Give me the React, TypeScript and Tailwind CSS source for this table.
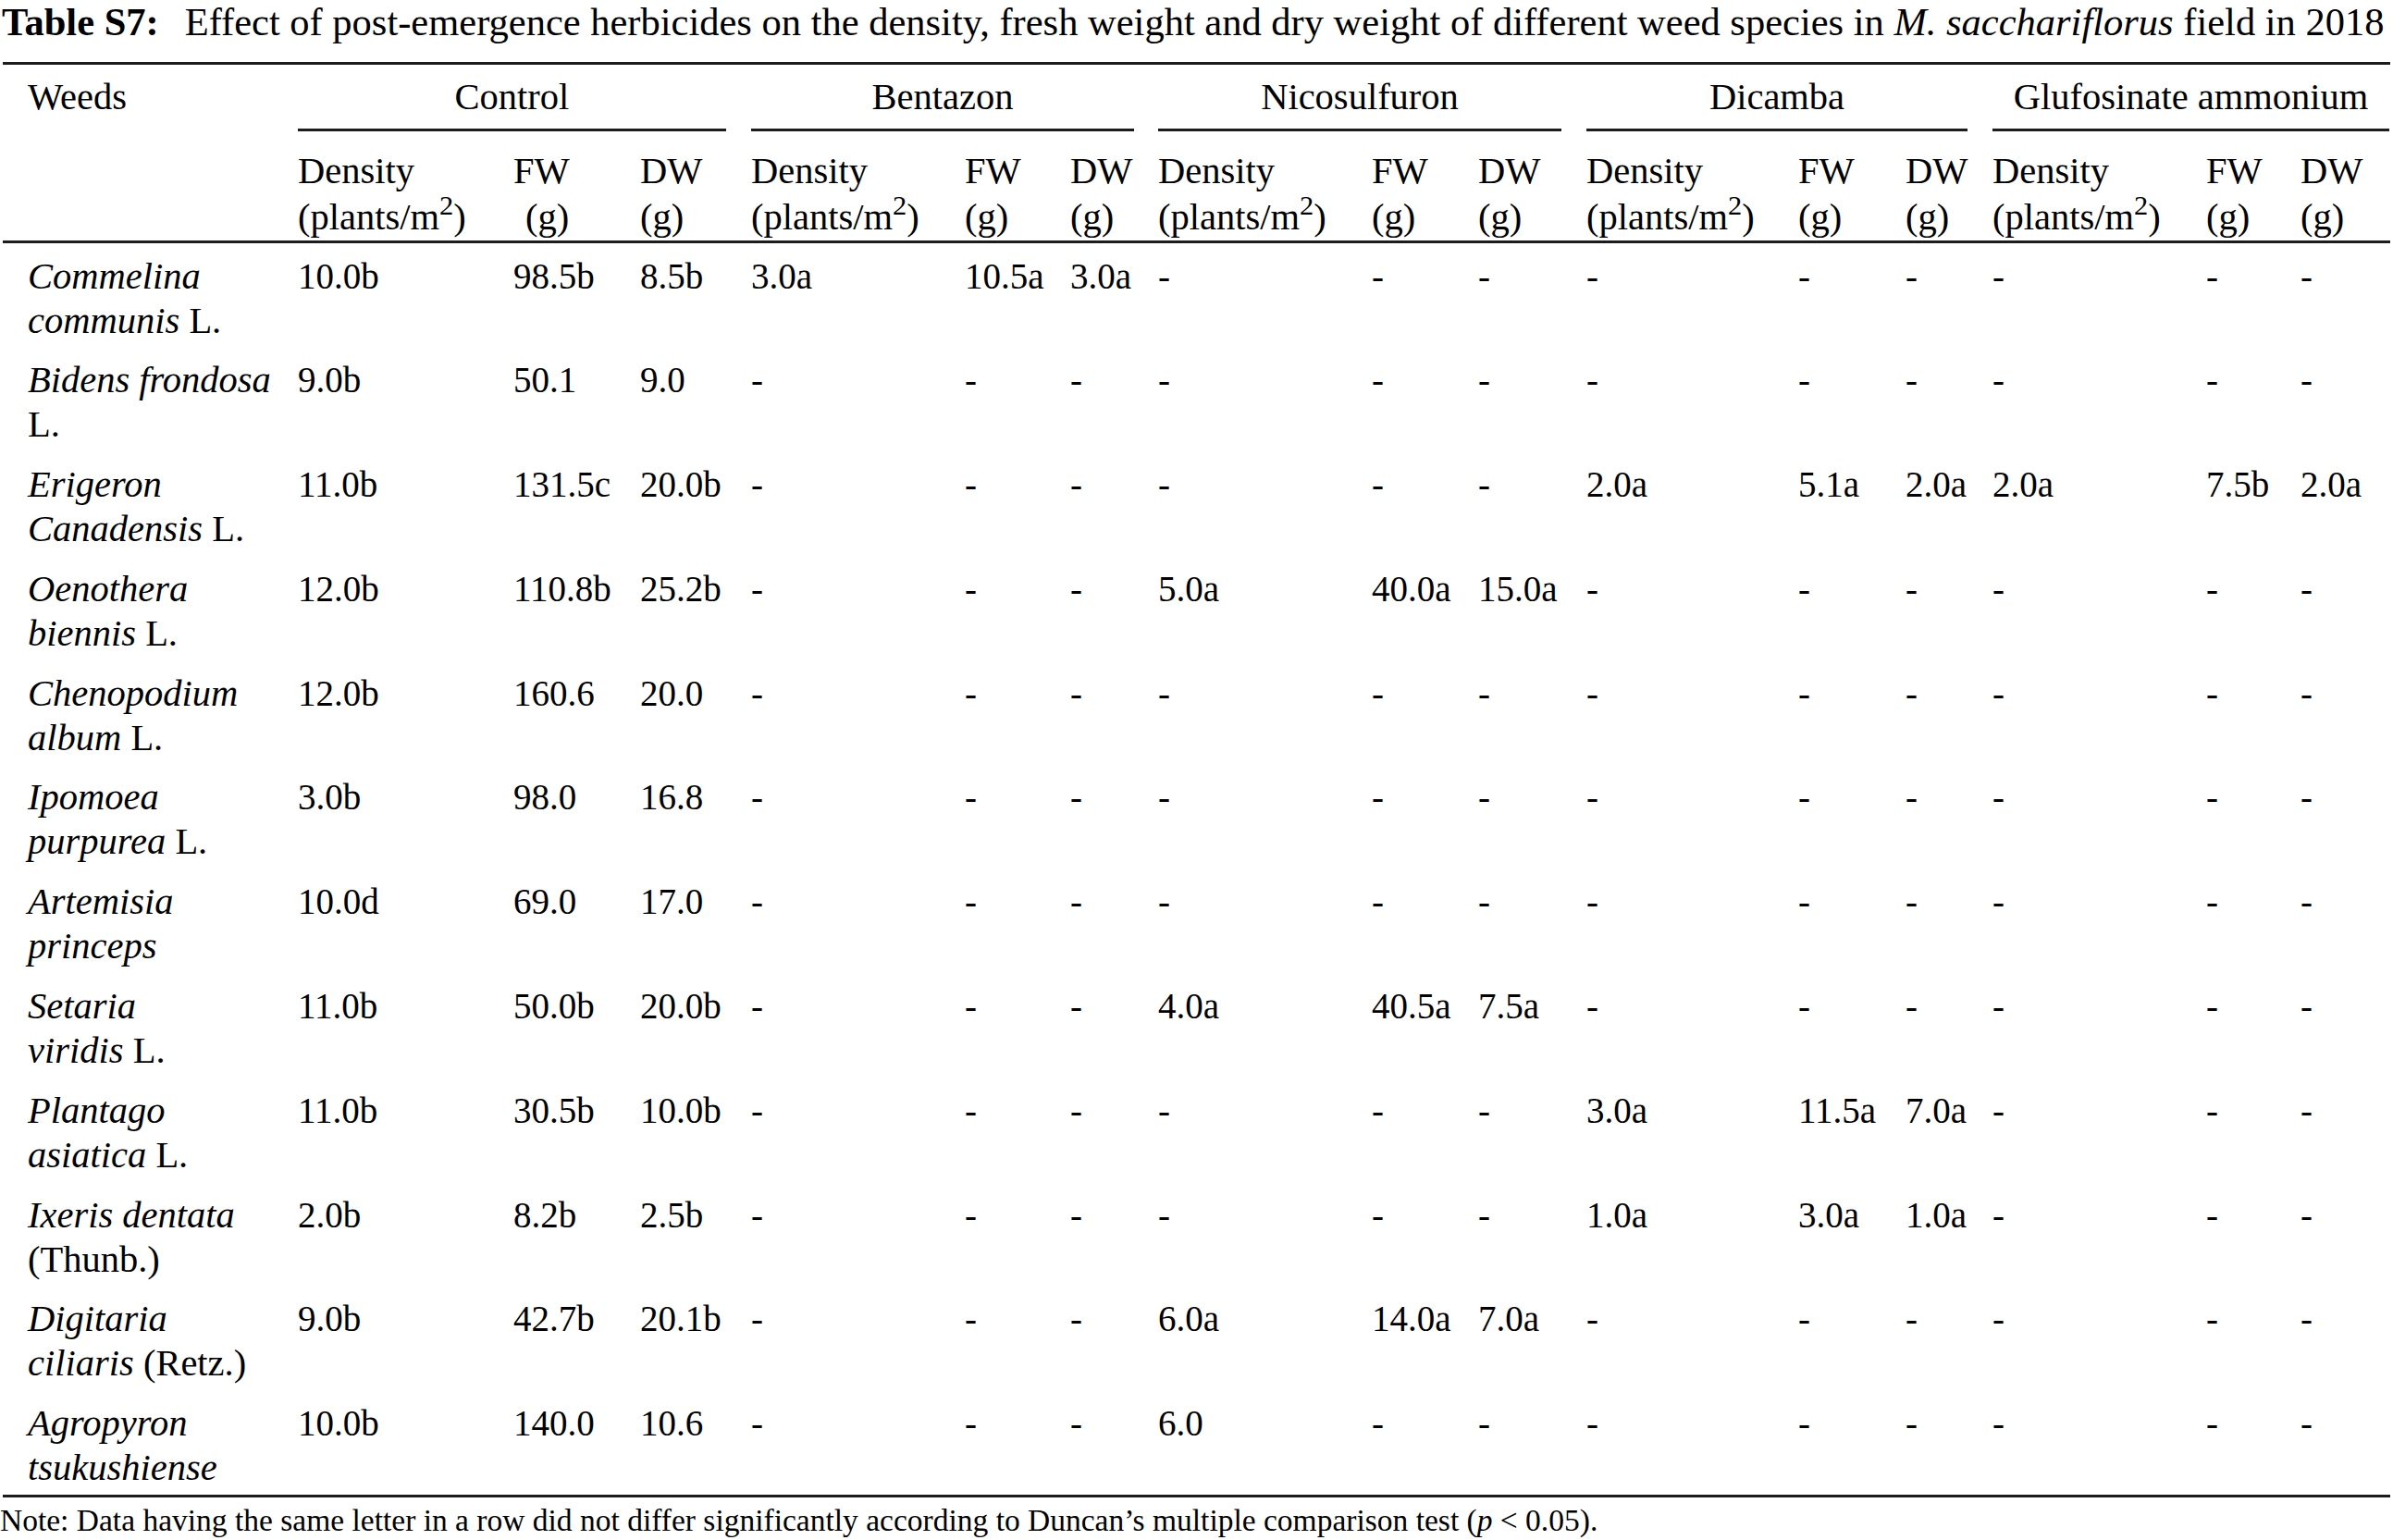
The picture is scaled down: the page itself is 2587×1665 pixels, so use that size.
import React from "react";

const COLS =
  "grid grid-cols-[322px_233px_137px_120px_231px_114px_95px_231px_115px_117px_229px_116px_94px_231px_102px_100px]";

type Row = { l1: React.ReactNode; l2: React.ReactNode; v: string[] };

const D = "-";

const rows: Row[] = [
  {
    l1: <i>Commelina</i>,
    l2: (
      <>
        <i>communis</i> L.
      </>
    ),
    v: ["10.0b", "98.5b", "8.5b", "3.0a", "10.5a", "3.0a", D, D, D, D, D, D, D, D, D],
  },
  {
    l1: <i>Bidens frondosa</i>,
    l2: <>L.</>,
    v: ["9.0b", "50.1", "9.0", D, D, D, D, D, D, D, D, D, D, D, D],
  },
  {
    l1: <i>Erigeron</i>,
    l2: (
      <>
        <i>Canadensis</i> L.
      </>
    ),
    v: ["11.0b", "131.5c", "20.0b", D, D, D, D, D, D, "2.0a", "5.1a", "2.0a", "2.0a", "7.5b", "2.0a"],
  },
  {
    l1: <i>Oenothera</i>,
    l2: (
      <>
        <i>biennis</i> L.
      </>
    ),
    v: ["12.0b", "110.8b", "25.2b", D, D, D, "5.0a", "40.0a", "15.0a", D, D, D, D, D, D],
  },
  {
    l1: <i>Chenopodium</i>,
    l2: (
      <>
        <i>album</i> L.
      </>
    ),
    v: ["12.0b", "160.6", "20.0", D, D, D, D, D, D, D, D, D, D, D, D],
  },
  {
    l1: <i>Ipomoea</i>,
    l2: (
      <>
        <i>purpurea</i> L.
      </>
    ),
    v: ["3.0b", "98.0", "16.8", D, D, D, D, D, D, D, D, D, D, D, D],
  },
  {
    l1: <i>Artemisia</i>,
    l2: <i>princeps</i>,
    v: ["10.0d", "69.0", "17.0", D, D, D, D, D, D, D, D, D, D, D, D],
  },
  {
    l1: <i>Setaria</i>,
    l2: (
      <>
        <i>viridis</i> L.
      </>
    ),
    v: ["11.0b", "50.0b", "20.0b", D, D, D, "4.0a", "40.5a", "7.5a", D, D, D, D, D, D],
  },
  {
    l1: <i>Plantago</i>,
    l2: (
      <>
        <i>asiatica</i> L.
      </>
    ),
    v: ["11.0b", "30.5b", "10.0b", D, D, D, D, D, D, "3.0a", "11.5a", "7.0a", D, D, D],
  },
  {
    l1: <i>Ixeris dentata</i>,
    l2: <>(Thunb.)</>,
    v: ["2.0b", "8.2b", "2.5b", D, D, D, D, D, D, "1.0a", "3.0a", "1.0a", D, D, D],
  },
  {
    l1: <i>Digitaria</i>,
    l2: (
      <>
        <i>ciliaris</i> (Retz.)
      </>
    ),
    v: ["9.0b", "42.7b", "20.1b", D, D, D, "6.0a", "14.0a", "7.0a", D, D, D, D, D, D],
  },
  {
    l1: <i>Agropyron</i>,
    l2: <i>tsukushiense</i>,
    v: ["10.0b", "140.0", "10.6", D, D, D, "6.0", D, D, D, D, D, D, D, D],
  },
];

const groups = [
  { name: "Control", mr: "mr-[27px]" },
  { name: "Bentazon", mr: "mr-[26px]" },
  { name: "Nicosulfuron", mr: "mr-[27px]" },
  { name: "Dicamba", mr: "mr-[27px]" },
  { name: "Glufosinate ammonium", mr: "mr-[4px]" },
];

function Rule({ className = "" }: { className?: string }) {
  return <div className={"h-[3px] bg-[#1c1c1c] mx-[3px] " + className} />;
}

function SubHead({ indentG }: { indentG?: boolean }) {
  return (
    <>
      <div>
        Density
        <br />
        (plants/m<sup>2</sup>)
      </div>
      <div>
        FW
        <br />
        <span className={indentG ? "pl-[13px]" : ""}>(g)</span>
      </div>
      <div>
        DW
        <br />
        (g)
      </div>
    </>
  );
}

export default function App() {
  return (
    <div className="w-[2587px] h-[1665px] overflow-hidden bg-white text-black font-['Liberation_Serif','Times_New_Roman',serif]">
      {/* Title */}
      <div className="text-[42.5px] leading-[47px] whitespace-nowrap pl-[2px]">
        <span className="font-bold">Table S7:</span>
        <span className="ml-[28px]">
          Effect of post-emergence herbicides on the density, fresh weight and dry weight of different weed species
          in <i>M. sacchariflorus</i> field in 2018
        </span>
      </div>

      <Rule className="mt-[20px]" />

      <div className="text-[40.5px]">
        {/* Group header row */}
        <div className={COLS + " leading-[48px]"}>
          <div className="pl-[30px] pt-[11px]">Weeds</div>
          {groups.map((g) => (
            <div key={g.name} className="col-span-3 pt-[11px]">
              <div className={g.mr}>
                <div className="text-center whitespace-nowrap">{g.name}</div>
                <div className="h-[2.5px] bg-[#1c1c1c] mt-[10px]" />
              </div>
            </div>
          ))}
        </div>

        {/* Sub header row */}
        <div className={COLS + " leading-[50px] pt-[18px] whitespace-nowrap"}>
          <div />
          <SubHead indentG />
          <SubHead />
          <SubHead />
          <SubHead />
          <SubHead />
        </div>

        <Rule />

        {/* Data rows */}
        <div className="leading-[48px]">
          {rows.map((r, i) => (
            <div key={i} className={COLS + " pt-[12px] pb-[4.8px]"}>
              <div className="pl-[30px] whitespace-nowrap">
                {r.l1}
                <br />
                {r.l2}
              </div>
              {r.v.map((v, j) => (
                <div key={j} className="whitespace-nowrap text-[39px]">
                  {v}
                </div>
              ))}
            </div>
          ))}
        </div>
      </div>

      <Rule />

      {/* Note */}
      <div className="text-[33.5px] leading-[34px] mt-[8px] whitespace-nowrap">
        Note: Data having the same letter in a row did not differ significantly according to Duncan’s multiple
        comparison test (<i>p</i> &lt; 0.05).
      </div>
    </div>
  );
}
